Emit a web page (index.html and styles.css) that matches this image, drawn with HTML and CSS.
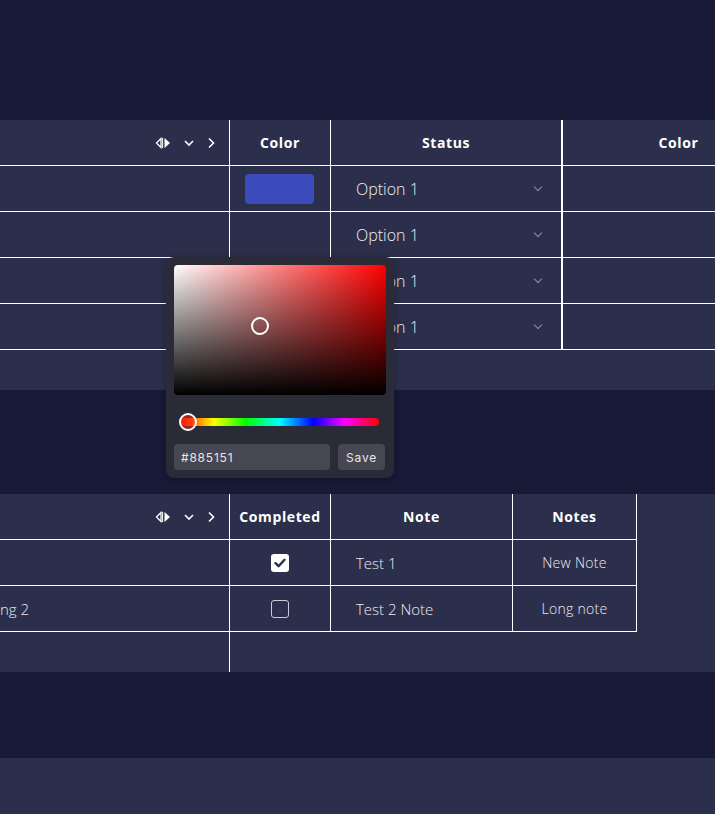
FILE: index.html
```html
<!doctype html>
<html lang="en">

<head>
    <meta charset="UTF-8">
    <title>Grid with colour picker</title>
    <link rel="stylesheet" href="styles.css">
</head>

<body>
    <div class="page">
        <div class="gap gap-top"></div>

        <section class="panel">
            <div class="grid">
                <div class="row head">
                    <div class="cell c-name">
                        <span class="tools">
                            <svg class="ico ico-pin" viewBox="0 0 16 12" width="16" height="12">
                                <polygon points="6,1.5 1.5,6 6,10.5" fill="none" stroke="#fff" stroke-width="1.3"/>
                                <line x1="7.6" y1="1" x2="7.6" y2="11" stroke="#fff" stroke-width="1"/>
                                <polygon points="9.5,1 15,6 9.5,11" fill="#fff"/>
                            </svg>
                            <svg class="ico" viewBox="0 0 12 12" width="12" height="12">
                                <polyline points="2,4 6,8 10,4" fill="none" stroke="#fff" stroke-width="1.6"/>
                            </svg>
                            <svg class="ico" viewBox="0 0 12 12" width="12" height="12">
                                <polyline points="4,1.5 8.5,6 4,10.5" fill="none" stroke="#fff" stroke-width="1.6"/>
                            </svg>
                        </span>
                    </div>
                    <div class="cell c-color">Color</div>
                    <div class="cell c-status thick">Status</div>
                    <div class="cell c-extra">Color</div>
                </div>
                <div class="row">
                    <div class="cell c-name"></div>
                    <div class="cell c-color"><span class="swatch"></span></div>
                    <div class="cell c-status thick select">Option 1<span class="caret"></span></div>
                    <div class="cell c-extra"></div>
                </div>
                <div class="row">
                    <div class="cell c-name"></div>
                    <div class="cell c-color"></div>
                    <div class="cell c-status thick select">Option 1<span class="caret"></span></div>
                    <div class="cell c-extra"></div>
                </div>
                <div class="row">
                    <div class="cell c-name"></div>
                    <div class="cell c-color"></div>
                    <div class="cell c-status thick select">Option 1<span class="caret"></span></div>
                    <div class="cell c-extra"></div>
                </div>
                <div class="row">
                    <div class="cell c-name"></div>
                    <div class="cell c-color"></div>
                    <div class="cell c-status thick select">Option 1<span class="caret"></span></div>
                    <div class="cell c-extra"></div>
                </div>
                <div class="row foot"></div>
            </div>

            <!-- colour picker opened from the Color cell -->
            <div class="picker">
                <div class="sat">
                    <span class="sat-thumb"></span>
                </div>
                <div class="hue">
                    <span class="hue-thumb"></span>
                </div>
                <div class="picker-bar">
                    <input class="hex" type="text" value="#885151">
                    <button class="save" type="button">Save</button>
                </div>
            </div>
        </section>

        <div class="gap gap-mid"></div>

        <section class="panel">
            <div class="grid grid-fit">
                <div class="row head">
                    <div class="cell c-name">
                        <span class="tools">
                            <svg class="ico ico-pin" viewBox="0 0 16 12" width="16" height="12">
                                <polygon points="6,1.5 1.5,6 6,10.5" fill="none" stroke="#fff" stroke-width="1.3"/>
                                <line x1="7.6" y1="1" x2="7.6" y2="11" stroke="#fff" stroke-width="1"/>
                                <polygon points="9.5,1 15,6 9.5,11" fill="#fff"/>
                            </svg>
                            <svg class="ico" viewBox="0 0 12 12" width="12" height="12">
                                <polyline points="2,4 6,8 10,4" fill="none" stroke="#fff" stroke-width="1.6"/>
                            </svg>
                            <svg class="ico" viewBox="0 0 12 12" width="12" height="12">
                                <polyline points="4,1.5 8.5,6 4,10.5" fill="none" stroke="#fff" stroke-width="1.6"/>
                            </svg>
                        </span>
                    </div>
                    <div class="cell c-color">Completed</div>
                    <div class="cell c-note">Note</div>
                    <div class="cell c-notes">Notes</div>
                </div>
                <div class="row">
                    <div class="cell c-name text"></div>
                    <div class="cell c-color"><span class="check on">
                        <svg viewBox="0 0 18 18" width="18" height="18">
                            <polyline points="4.5,9.2 7.6,12.2 13.5,5.8" fill="none" stroke="#2b2f4b" stroke-width="2.4" stroke-linecap="round" stroke-linejoin="round"/>
                        </svg>
                    </span></div>
                    <div class="cell c-note text">Test 1</div>
                    <div class="cell c-notes text">New Note</div>
                </div>
                <div class="row">
                    <div class="cell c-name text">ng 2</div>
                    <div class="cell c-color"><span class="check"></span></div>
                    <div class="cell c-note text">Test 2 Note</div>
                    <div class="cell c-notes text">Long note</div>
                </div>
                <div class="row foot">
                    <div class="cell c-name"></div>
                </div>
            </div>
        </section>

        <div class="gap gap-low"></div>

        <section class="panel panel-last"></section>
    </div>
</body>

</html>
```

FILE: styles.css
```css
@charset "UTF-8";
*,
*:after,
*:before {
    box-sizing: border-box;
    padding: 0;
    margin: 0;
}

body {
    background: #191a37;
    font-family: "Open Sans", Lato, sans-serif;
    color: #fff;
    overflow: hidden;
}

.page {
    width: 715px;
}

.gap-top {
    height: 120px;
}

.gap-mid {
    height: 104px;
}

.gap-low {
    height: 86px;
}

.panel {
    position: relative;
    background: #2b2f4b;
}

.panel-last {
    height: 56px;
}

/* the grid is scrolled sideways, so the first column starts off-screen */
.grid {
    margin-left: -60px;
    overflow: hidden;
}

.row {
    display: flex;
    width: max-content;
    height: 46px;
    border-bottom: 1px solid #fff;
}

.row.foot {
    height: 40px;
    border-bottom: 0;
}

.cell {
    display: flex;
    align-items: center;
    justify-content: center;
    height: 100%;
    border-right: 1px solid #fff;
    font-size: 14px;
}

.head .cell {
    font-weight: 700;
    letter-spacing: 0.6px;
}

.c-name {
    width: 290px;
    justify-content: flex-end;
    padding-right: 12px;
}

.c-color {
    width: 101px;
}

.c-status {
    width: 232px;
}

.c-status.thick {
    border-right-width: 2px;
}

.c-extra {
    width: 232px;
}

.c-note {
    width: 182px;
    justify-content: flex-start;
    padding-left: 25px;
}

.head .c-note {
    justify-content: center;
    padding-left: 0;
}

.c-notes {
    width: 124px;
}

.tools {
    display: flex;
    align-items: center;
    gap: 10px;
}

.ico {
    display: block;
}

.ico-pin {
    margin-right: 2px;
}

.text {
    font-weight: 300;
    color: #eaebf2;
    font-size: 15px;
}

.c-name.text {
    justify-content: flex-start;
    padding-left: 60px;
}

.c-notes.text {
    font-size: 14px;
    letter-spacing: 0.3px;
}

.swatch {
    width: 69px;
    height: 30px;
    border-radius: 4px;
    background: #3c4bbc;
    margin-left: -1px;
}

.select {
    justify-content: space-between;
    padding: 0 20px 0 25px;
    font-size: 16px;
    font-weight: 300;
    color: #eeeef4;
}

.caret {
    width: 6px;
    height: 6px;
    border-right: 1.3px solid #8d90aa;
    border-bottom: 1.3px solid #8d90aa;
    transform: rotate(45deg);
    margin-top: -3px;
}

.check {
    width: 18px;
    height: 18px;
    border-radius: 3px;
    border: 1.6px solid #c9cbd6;
}

.check.on {
    border: 0;
    background: #fff;
}

.check svg {
    display: block;
}

/* colour picker popover */
.picker {
    position: absolute;
    top: 137px;
    left: 166px;
    width: 228px;
    padding: 8px;
    background: #2a2b37;
    border-radius: 8px;
    box-shadow: 0 2px 8px rgba(0, 0, 0, 0.3);
}

.sat {
    position: relative;
    height: 130px;
    border-radius: 4px;
    background: linear-gradient(to bottom, rgba(0, 0, 0, 0), #000), linear-gradient(to right, #fff, #f00);
}

.sat-thumb {
    position: absolute;
    left: 77px;
    top: 52px;
    width: 18px;
    height: 18px;
    border: 2px solid #fff;
    border-radius: 50%;
}

.hue {
    position: relative;
    height: 8px;
    margin: 23px 7px 0 6px;
    border-radius: 4px;
    background: linear-gradient(to right, #f00 0%, #ff0 17%, #0f0 33%, #0ff 50%, #00f 67%, #f0f 83%, #f00 100%);
}

.hue-thumb {
    position: absolute;
    left: -1px;
    top: -5px;
    width: 18px;
    height: 18px;
    border: 2px solid #fff;
    border-radius: 50%;
    background: rgba(255, 40, 20, 0.5);
}

.picker-bar {
    display: flex;
    gap: 8px;
    margin-top: 18px;
}

.hex,
.save {
    height: 26px;
    border: 0;
    border-radius: 4px;
    background: #464752;
    color: #e6e6ea;
    font-family: Inter, "DejaVu Sans", sans-serif;
    font-size: 12px;
    letter-spacing: 0.8px;
}

.hex {
    width: 156px;
    padding-left: 7px;
    outline: none;
}

.save {
    width: 47px;
}
```
